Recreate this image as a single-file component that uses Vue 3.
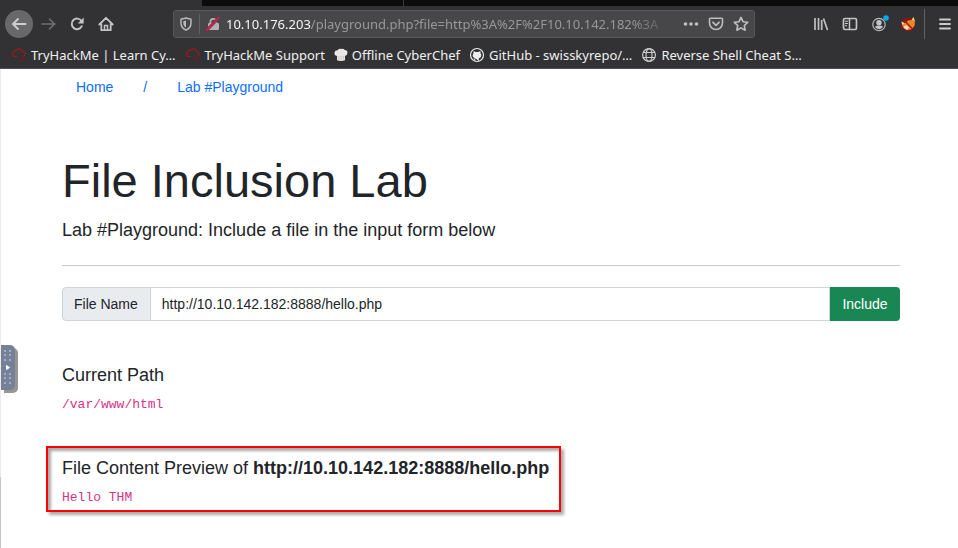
<script setup>
import { ref } from 'vue'

const fileName = ref('http://10.10.142.182:8888/hello.php')
const preview = ref(fileName.value)
const bookmarks = [
  { icon: 'cloud', label: 'TryHackMe | Learn Cy…' },
  { icon: 'cloud', label: 'TryHackMe Support' },
  { icon: 'chef', label: 'Offline CyberChef' },
  { icon: 'github', label: 'GitHub - swisskyrepo/…' },
  { icon: 'globe', label: 'Reverse Shell Cheat S…' }
]
const dotRows = [5, 9, 14, 28, 32, 37]
</script>

<template>
  <div class="window">
    <header class="chrome">
      <div class="tabs"><span class="tab-active"></span><span class="tab-rest"></span><span class="tab-tail"></span></div>
      <nav class="toolbar" aria-label="Browser">
        <div class="nav-buttons">
          <button class="tool back" aria-label="Back">
            <svg width="16" height="16" viewBox="0 0 16 16"><path d="M14.500 8H2M7 3L2 8l5 5" fill="none" stroke="#cfcfd0" stroke-width="1.800" stroke-linecap="round" stroke-linejoin="round" /></svg>
          </button>
          <button class="tool" aria-label="Forward">
            <svg width="16" height="16" viewBox="0 0 16 16"><path d="M2 8H15M9.500 3l5 5-5 5" fill="none" stroke="#707072" stroke-width="1.600" stroke-linecap="round" stroke-linejoin="round" /></svg>
          </button>
          <button class="tool" aria-label="Reload">
            <svg width="16" height="16" viewBox="0 0 16 16"><path d="M12.800 10.200A5.300 5.300 0 1 1 12.500 5" fill="none" stroke="#c4c4c5" stroke-width="1.900" stroke-linecap="round" /><path d="M14.700 1.500v6H8.700z" fill="#c4c4c5" /></svg>
          </button>
          <button class="tool" aria-label="Home">
            <svg width="16" height="16" viewBox="0 0 16 16"><path d="M1.300 8.500L8 1.800l6.700 6.700M3.300 7.500v6.700h9.400V7.500" fill="none" stroke="#c4c4c5" stroke-width="1.800" stroke-linecap="round" stroke-linejoin="round" /><path d="M6.500 14V9.500h3V14" fill="none" stroke="#c4c4c5" stroke-width="1.500" /></svg>
          </button>
        </div>
        <div class="address">
          <svg width="14" height="14" viewBox="0 0 14 14"><path d="M7 1L12 2.300V6c0 3.500-1.800 5.700-5 7-3.200-1.300-5-3.500-5-7V2.300z" fill="none" stroke="#b8b8b9" stroke-width="1.500" stroke-linejoin="round" /><path d="M7 3.500L4.300 4.200V6c0 2 .9 3.500 2.700 4.500z" fill="#b8b8b9" /></svg>
          <span class="divider"></span>
          <svg width="14" height="14" viewBox="0 0 14 14"><path d="M4.500 6V4.500a2.700 2.700 0 0 1 5.400 0V6" fill="none" stroke="#b2b2b3" stroke-width="1.800" /><rect x="2" y="6" width="11" height="7" rx="1" fill="#b2b2b3" /><path d="M1 13L12.500 1" stroke="#4a4a4d" stroke-width="3" /><path d="M1 13L12.500 1" stroke="#f0104a" stroke-width="1.800" stroke-linecap="round" /></svg>
          <div class="url"><b>10.10.176.203</b>/playground.php?file=http%3A%2F%2F10.10.142.182%3A</div>
          <button class="tool small" aria-label="Page actions">
            <svg width="16" height="16" viewBox="0 0 16 16" fill="#c0c0c1"><circle cx="2.500" cy="8" r="1.800" /><circle cx="8" cy="8" r="1.800" /><circle cx="13.500" cy="8" r="1.800" /></svg>
          </button>
          <button class="tool small" aria-label="Save to Pocket">
            <svg width="16" height="16" viewBox="0 0 16 16"><path d="M2.500 2.300h11q1 0 1 1V7a6.500 6.500 0 0 1-13 0V3.300q0-1 1-1z" fill="none" stroke="#bcbcbd" stroke-width="1.600" /><path d="M5 6.300l3 3 3-3" fill="none" stroke="#bcbcbd" stroke-width="1.800" stroke-linecap="round" stroke-linejoin="round" /></svg>
          </button>
          <button class="tool small" aria-label="Bookmark">
            <svg width="16" height="16" viewBox="0 0 16 16"><path d="M8 1.400l2 4.300 4.700.6-3.400 3.200.8 4.700L8 11.900l-4.100 2.300.8-4.700L1.300 6.300 6 5.700z" fill="none" stroke="#c0c0c1" stroke-width="1.600" stroke-linejoin="round" /></svg>
          </button>
        </div>
        <div class="extras">
          <button class="tool small" aria-label="Library">
            <svg width="16" height="16" viewBox="0 0 16 16"><path d="M2 2v12M5.500 2v12M8.700 4v10M10.500 2.500l4 11.500" fill="none" stroke="#c0c0c1" stroke-width="1.700" /></svg>
          </button>
          <button class="tool small" aria-label="Sidebars">
            <svg width="16" height="16" viewBox="0 0 16 16"><rect x="1.500" y="2.500" width="13" height="11" rx="1.500" fill="none" stroke="#c4c4c5" stroke-width="1.700" /><path d="M7.500 3v10" stroke="#c4c4c5" stroke-width="1.500" /><path d="M3 5.300h3M3 7.500h3M3 9.700h2" stroke="#c4c4c5" /></svg>
          </button>
          <button class="tool small" aria-label="Account">
            <svg width="20" height="20" viewBox="0 0 20 20"><circle cx="10" cy="10.500" r="6.200" fill="none" stroke="#b8b8b9" stroke-width="1.200" /><circle cx="10" cy="8.700" r="2.700" fill="#c4c4c5" /><path d="M5.800 12.800q4.200-2.700 8.400 0-1.500 2.400-4.200 2.400t-4.200-2.400z" fill="#c4c4c5" /><circle cx="17" cy="4" r="2.800" fill="#00adf5" /></svg>
          </button>
          <button class="tool small" aria-label="FoxyProxy">
            <svg width="16" height="16" viewBox="0 0 16 16"><circle cx="8" cy="8.500" r="6" fill="none" stroke="#a30d10" stroke-width="1.400" /><path d="M1.500 6.500l3.500.5 3-2.500 3.500-.5 2-3 1.500 4-.5 5-3.500 3.500-4 .5-4-2.500z" fill="#e88a26" /><path d="M1.300 5.500l3 1.500-1.500 2zM4 10l3-.5 2 2-2 2.500-3-2z" fill="#f1dfcf" /><path d="M12 4l1.500-3 1 3.500z" fill="#f4d9a8" /><path d="M4 4l8.500 9" stroke="#b80a0d" stroke-width="1.400" /></svg>
          </button>
          <span class="divider tall"></span>
          <button class="tool small" aria-label="Menu">
            <svg width="16" height="16" viewBox="0 0 16 16"><path d="M3 3.500h10M3 8h10M3 12.500h10" stroke="#cacacb" stroke-width="1.800" stroke-linecap="round" /></svg>
          </button>
        </div>
      </nav>
      <div class="bookmarks">
        <a v-for="b in bookmarks" :key="b.label" href="#">
          <svg v-if="b.icon === 'cloud'" width="16" height="16" viewBox="0 0 16 16"><path d="M6 9.500H3.300a2.200 2.200 0 0 1-.3-4.300 2.500 2.500 0 0 1 3-2.300 3.300 3.300 0 0 1 5.600 1.800A2.500 2.500 0 0 1 12.500 9.500" fill="none" stroke="#a3181b" stroke-width="1.200" /><path d="M8 10.500h3M10 12h4M9 14h4" stroke="#741b1e" /></svg>
          <svg v-else-if="b.icon === 'chef'" width="14" height="14" viewBox="0 0 14 14"><path d="M3 8Q0 7.500.5 4.500 1 2 3.700 2.200 5 .2 7.300 1q2-1 3.400 1 2.800.2 2.800 2.700Q13.300 7.500 11 8v4.300q-4 1.400-8 0z" fill="#e9e8e6" /><path d="M4.800 8v3.500M7 8v3.700M9.200 8v3.500" stroke="#bab8b5" stroke-width=".7" /></svg>
          <svg v-else-if="b.icon === 'github'" width="16" height="16" viewBox="0 0 16 16"><circle cx="8" cy="8" r="6.500" fill="#303033" stroke="#ededee" stroke-width="1.200" /><path d="M6.200 14v-2.300q-2 .4-2.600-1.400M6.200 11.200C3.700 10.700 3 8 4.500 6.200q-.3-1.200.2-2 1.200.1 2 .8h2.600q.8-.7 2-.8.5.8.2 2C13 8 12.300 10.700 9.800 11.200V14z" fill="#ededee" /></svg>
          <svg v-else width="16" height="16" viewBox="0 0 16 16" fill="none" stroke="#cdcdce" stroke-width="1.200"><circle cx="8" cy="8" r="6.400" /><ellipse cx="8" cy="8" rx="3" ry="6.400" /><path d="M2.300 5.500h11.400M2.300 10.500h11.400" /></svg>
          <span>{{ b.label }}</span>
        </a>
      </div>
    </header>

    <main class="page">
      <nav class="crumbs" aria-label="Breadcrumb">
        <a href="#">Home</a><a href="#">/</a><a href="#">Lab #Playground</a>
      </nav>
      <h1>File Inclusion Lab</h1>
      <p class="lead">Lab #Playground: Include a file in the input form below</p>
      <hr />
      <form class="group" @submit.prevent="preview = fileName">
        <label for="file">File Name</label>
        <input id="file" v-model="fileName" type="text" />
        <button type="submit">Include</button>
      </form>
      <section class="path">
        <h2>Current Path</h2>
        <code>/var/www/html</code>
      </section>
      <section class="preview">
        <h2>File Content Preview of <b>{{ preview }}</b></h2>
        <code>Hello THM</code>
      </section>
      <button class="handle" aria-label="Open panel">
        <svg width="14" height="45" viewBox="0 0 14 45"><g fill="#a3afbf"><template v-for="y in dotRows" :key="y"><rect x="3" :y="y" width="2" height="2" /><rect x="8" :y="y" width="2" height="2" /></template></g><path d="M5.500 20.500l3 2-3 2z" fill="#fff" stroke="#fff" stroke-linejoin="round" /></svg>
      </button>
    </main>
  </div>
</template>

<style>
body { margin: 0; background: #fff; }
</style>

<style scoped>
* { box-sizing: border-box; }
.window { min-height: 100vh; display: flex; flex-direction: column; font-family: "Liberation Sans", Arial, sans-serif; color: #212529; }
button { font: inherit; border: 0; padding: 0; background: none; cursor: pointer; }
a { text-decoration: none; }
svg { display: block; flex: none; }
.chrome { background: #323234; border-bottom: 1px solid #4e4e50; font-family: "Noto Sans", sans-serif; font-size: 13px; color: #f0f0f1; }
.tabs { display: flex; height: 6px; }
.tab-active { width: 202px; }
.tab-rest { width: 202px; background: #0c0c0d; border-right: 1px solid #39393b; }
.tab-tail { flex: 1; background: #0c0c0d; }
.toolbar { display: flex; align-items: center; height: 36px; padding: 0 1px 0 5px; }
.nav-buttons { display: flex; gap: 1px; width: 168px; flex: none; }
.tool { display: grid; place-items: center; width: 28px; height: 28px; flex: none; }
.back { border-radius: 50%; background: #68686a; }
.small { width: 25px; }
.address { display: flex; align-items: center; flex: 1; min-width: 0; max-width: 582px; height: 28px; padding: 0 1px 0 5px; gap: 6px; background: #474749; border: 1px solid #565658; border-radius: 3px; }
.address .small { margin-left: -6px; }
.divider { width: 1px; height: 20px; background: #626264; flex: none; }
.url { flex: 1; min-width: 0; margin-right: 6px; overflow: hidden; white-space: nowrap; line-height: 20px; color: #98989a; mask-image: linear-gradient(to right, #000 calc(100% - 40px), transparent); }
.url b { font-weight: 400; color: #f4f4f5; }
.extras { display: flex; align-items: center; gap: 4px; margin-left: auto; }
.tall { height: 30px; margin-right: 3px; }
.bookmarks { display: flex; align-items: center; gap: 9px; height: 26px; padding-left: 11px; white-space: nowrap; overflow: hidden; }
.bookmarks a { display: flex; align-items: center; gap: 4px; color: #f0f0f1; }
.page { position: relative; flex: 1; padding: 8px 58px 36px 61px; border: 0 solid; border-left-width: 1px; border-image: linear-gradient(#ececec 85%, #c6c6c6 85%) 1; }
.crumbs { display: flex; gap: 30px; padding-left: 14px; font-size: 14px; line-height: 20px; }
.crumbs a { color: #0d6efd; }
h1 { margin: 55px 0 0; font-size: 47px; line-height: 58px; font-weight: 400; }
.lead { margin: 6px 0 0; font-size: 18px; line-height: 28px; }
hr { margin: 21px 0; border: 0; border-top: 1px solid #c8c9ca; }
.group { display: flex; height: 34px; font-size: 14px; }
.group label { display: flex; align-items: center; padding: 0 12px 0 11px; background: #e9ecef; border: 1px solid #ced4da; border-radius: 4px 0 0 4px; }
.group input { flex: 1; min-width: 0; margin-left: -1px; padding: 0 11px; font: inherit; color: #212529; background: #fff; border: 1px solid #ced4da; border-radius: 0; }
.group button { width: 70px; color: #fff; background: #198754; border-radius: 0 4px 4px 0; }
h2 { margin: 0 0 10px; font-size: 18px; line-height: 22px; font-weight: 400; }
code { display: block; font-family: "Liberation Mono", monospace; font-size: 13px; line-height: 18px; color: #d63384; }
.path { margin-top: 43px; }
.preview { width: fit-content; margin: 32px 0 0 -16px; padding: 9px 10px 3px 14px; border: 2px solid #f00; box-shadow: 3px 3px 3px #00000055, inset 3px 3px 3px #00000055; }
.handle { position: absolute; left: 0; top: 276px; width: 14px; height: 45px; background: #748196; border-radius: 0 5px 5px 0; box-shadow: 3px 3px 0 #969696; }
</style>
